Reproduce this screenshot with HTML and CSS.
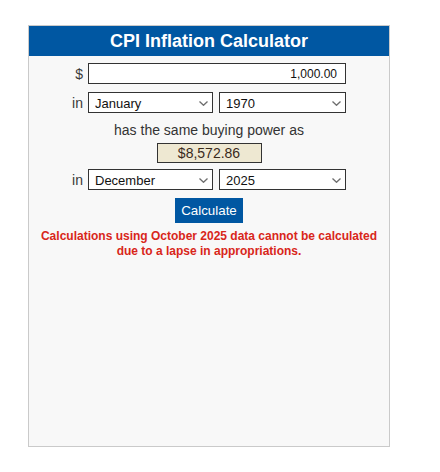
FILE: index.html
```html
<!DOCTYPE html>
<html lang="en">
<head>
<meta charset="utf-8">
<title>CPI Inflation Calculator</title>
<link rel="stylesheet" href="styles.css">
</head>
<body>
<div class="calc">
  <div class="calc-head">CPI Inflation Calculator</div>
  <div class="calc-body">
    <div class="row">
      <span class="lbl">$</span>
      <input class="amount" type="text" value="1,000.00">
    </div>
    <div class="row row-gap">
      <span class="lbl">in</span>
      <div class="pair">
        <div class="sel sel-m">
          <select><option>January</option></select>
          <svg class="chev" width="9" height="5" viewBox="0 0 9 5"><polyline points="0.5,0.5 4.5,4.3 8.5,0.5" fill="none" stroke="#6e6e6e" stroke-width="1.3"/></svg>
        </div>
        <div class="sel sel-y">
          <select><option>1970</option></select>
          <svg class="chev" width="9" height="5" viewBox="0 0 9 5"><polyline points="0.5,0.5 4.5,4.3 8.5,0.5" fill="none" stroke="#6e6e6e" stroke-width="1.3"/></svg>
        </div>
      </div>
    </div>
    <p class="same">has the same buying power as</p>
    <div class="result">$8,572.86</div>
    <div class="row row-gap2">
      <span class="lbl">in</span>
      <div class="pair">
        <div class="sel sel-m">
          <select><option>December</option></select>
          <svg class="chev" width="9" height="5" viewBox="0 0 9 5"><polyline points="0.5,0.5 4.5,4.3 8.5,0.5" fill="none" stroke="#6e6e6e" stroke-width="1.3"/></svg>
        </div>
        <div class="sel sel-y">
          <select><option>2025</option></select>
          <svg class="chev" width="9" height="5" viewBox="0 0 9 5"><polyline points="0.5,0.5 4.5,4.3 8.5,0.5" fill="none" stroke="#6e6e6e" stroke-width="1.3"/></svg>
        </div>
      </div>
    </div>
    <div class="btn-wrap"><button class="btn" type="button">Calculate</button></div>
    <p class="err">Calculations using October 2025 data cannot be calculated<br>due to a lapse in appropriations.</p>
  </div>
</div>
</body>
</html>
```
FILE: styles.css
```css
* { box-sizing: border-box; }
html, body { margin: 0; padding: 0; background: #ffffff; }
body {
  font-family: "Liberation Sans", Arial, sans-serif;
  color: #333333;
  padding: 25px 0 0 28px;
}
.calc {
  width: 362px;
  height: 422px;
  background: #f8f8f8;
  border: 1px solid #cacaca;
}
.calc-head {
  height: 30px;
  background: #0057a2;
  color: #ffffff;
  font-weight: bold;
  font-size: 18px;
  line-height: 30px;
  text-align: center;
}
.calc-body {
  padding-top: 7px;
}
.row {
  display: flex;
  align-items: center;
}
.row-gap { margin-top: 8px; }
.row-gap2 { margin-top: 6px; }
.lbl {
  width: 54px;
  margin-right: 5px;
  text-align: right;
  font-size: 14px;
  color: #3a3a3a;
}
.amount {
  width: 258px;
  height: 21px;
  margin: 0;
  border: 1px solid #333333;
  background: #ffffff;
  font-family: "Liberation Sans", Arial, sans-serif;
  font-size: 12px;
  color: #111111;
  text-align: right;
  padding: 0 8px 0 4px;
  outline: none;
}
.pair {
  display: flex;
  gap: 6px;
}
.sel {
  position: relative;
  height: 21px;
}
.sel-m { width: 125px; }
.sel-y { width: 127px; }
.sel select {
  -webkit-appearance: none;
  appearance: none;
  width: 100%;
  height: 21px;
  margin: 0;
  border: 1px solid #333333;
  border-radius: 0;
  background: #ffffff;
  font-family: "Liberation Sans", Arial, sans-serif;
  font-size: 13px;
  color: #111111;
  padding: 1px 0 0 6px;
  outline: none;
}
.chev {
  position: absolute;
  right: 5px;
  top: 9px;
  pointer-events: none;
}
.same {
  margin: 9px 0 0;
  font-size: 14px;
  line-height: 16px;
  text-align: center;
  color: #333333;
}
.result {
  width: 105px;
  height: 20px;
  margin: 5px auto 0;
  background: #eee8d2;
  border: 1px solid #333333;
  font-size: 14px;
  line-height: 18px;
  text-align: center;
  color: #3a2a1c;
}
.btn-wrap {
  margin-top: 8px;
  text-align: center;
}
.btn {
  height: 25px;
  padding: 0 6px;
  margin: 0;
  border: 0;
  border-radius: 0;
  background: #0057a2;
  color: #ffffff;
  font-family: "Liberation Sans", Arial, sans-serif;
  font-size: 13.33px;
  cursor: pointer;
}
.err {
  margin: 6px 0 0;
  font-size: 12px;
  line-height: 15px;
  font-weight: bold;
  text-align: center;
  color: #d8261a;
}
```
